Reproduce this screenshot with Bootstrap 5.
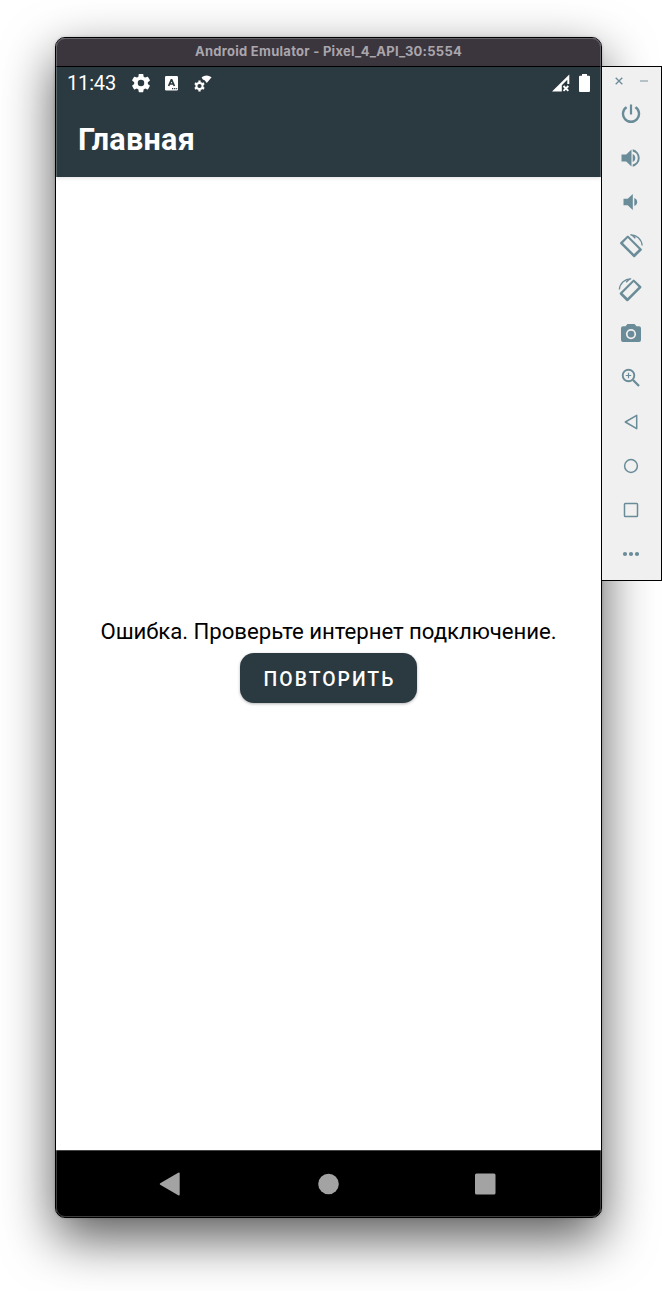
<!DOCTYPE html>
<html lang="ru">
<head>
<meta charset="utf-8">
<meta name="viewport" content="width=device-width, initial-scale=1">
<title>Android Emulator</title>
<link href="https://cdn.jsdelivr.net/npm/bootstrap@5.3.0/dist/css/bootstrap.min.css" rel="stylesheet">
<style>
  body { font-family: Roboto, sans-serif; background: #fff; height: 1291px; padding: 37px 0 0 55px; }
  svg { display: block; flex: none; fill: currentColor; }
  .emulator { width: 547px; height: 1181px; border: 1px solid #000; border-radius: 10px; background: #fff;
    box-shadow: 0 20px 52px rgba(0,0,0,.66), 0 0 3px rgba(0,0,0,.2); }
  .rim { inset: 0; border: 1px solid rgba(255,255,255,.24); border-radius: 9px; pointer-events: none; }
  .titlebar { height: 29px; background: #3b353e; border-bottom: 1px solid #000; color: #aaa6ac;
    font: 700 13px/26px Inter, sans-serif; letter-spacing: .27px; }
  .app-header { height: 110px; background: #2b3940; box-shadow: 0 1px 4px rgba(0,0,0,.12); }
  .status { height: 33px; padding: 0 11px 0 11px; }
  .clock { font-size: 20px; line-height: 33px; width: 48px; letter-spacing: -.15px; }
  .app-title { font-size: 30.5px; line-height: 36px; margin: 22px 0 0 22px; font-weight: 700; letter-spacing: .3px; }
  .message { font-size: 22.2px; line-height: 26px; color: #000; white-space: nowrap; letter-spacing: -.05px; }
  .retry { width: 177px; height: 50px; margin-top: 9px; border-radius: 14px; background: #2b3940 !important; color: #fff !important;
    font-size: 19.4px; font-weight: 500; letter-spacing: 2px; box-shadow: 0 1px 3px rgba(0,0,0,.3); border: 0; padding: 3px 0 0 2px; }
  .softkeys { height: 67px; background: #000; border-top: 1px solid #444; color: #a3a3a3; }
  .toolbox { width: 61px; height: 515px; margin: 29px 0 0 -1px; border: 1px solid #000; background: #f0f0f0; color: #6a8b98; z-index: 2; }
  .toolbox .winctl { height: 25px; padding: 3px 13px 0 13px; }
  .tool { height: 44px; padding-right: 1px; }
</style>
</head>
<body class="d-flex align-items-start overflow-hidden">
<main class="emulator position-relative overflow-visible d-flex flex-column flex-shrink-0">
  <div class="titlebar text-center rounded-top-3">Android Emulator - Pixel_4_API_30:5554</div>
  <header class="app-header text-white">
    <div class="status d-flex align-items-center">
      <span class="clock">11:43</span>
      <svg class="ms-3" width="20" height="20" viewBox="1.5 2.5 21 21"><path d="M19.14 12.94c.04-.3.06-.61.06-.94s-.02-.64-.07-.94l2.03-1.58a.49.49 0 0 0 .12-.61l-1.92-3.32a.49.49 0 0 0-.59-.22l-2.39.96c-.5-.38-1.03-.7-1.62-.94l-.36-2.54a.48.48 0 0 0-.48-.41h-3.84a.47.47 0 0 0-.47.41l-.36 2.54c-.59.24-1.13.57-1.62.94l-2.39-.96a.48.48 0 0 0-.59.22L2.74 8.87a.48.48 0 0 0 .12.61l2.03 1.58c-.05.3-.09.63-.09.94s.02.64.07.94l-2.03 1.58a.49.49 0 0 0-.12.61l1.92 3.32c.12.22.37.29.59.22l2.39-.96c.5.38 1.03.7 1.62.94l.36 2.54c.05.24.24.41.48.41h3.84c.24 0 .44-.17.47-.41l.36-2.54c.59-.24 1.13-.56 1.62-.94l2.39.96c.22.08.47 0 .59-.22l1.92-3.32a.48.48 0 0 0-.12-.61zM12 15.400a3.400 3.400 0 1 1 0-6.800 3.400 3.400 0 0 1 0 6.800z"/></svg>
      <svg style="margin-left:14px" width="13" height="15" viewBox="0 0 13 15"><rect width="13" height="14.5" rx="1.2"/><path d="M3.600 10 6.300 3.800h.4L9.400 10M4.500 8h4" fill="none" stroke="#2b3940" stroke-width="1.700"/><path d="M7 12h1.300v1.200H7zm2.100 0h1.300v1.200H9.100zm2.100 0h1v1.200h-1z" fill="#2b3940"/></svg>
      <svg style="margin-left:16px" width="18" height="18" viewBox="0 1 18 18"><path d="M7.600 3.200Q12.500-.2 17.600 3.200L12.800 9 10.600 6.200 8.800 5.400z"/><circle cx="5.500" cy="12" r="3.100" fill="none" stroke="currentColor" stroke-width="2"/><path d="M5.500 6.600v2M5.500 15.400v2M.9 9.300l1.700 1M8.400 13.700l1.700 1M.9 14.700l1.700-1M8.400 10.300l1.700-1" stroke="currentColor" stroke-width="2.300"/></svg>
      <svg class="ms-auto" width="18" height="18" viewBox="0 1 18 18" overflow="visible"><path d="M0 17.500 17.300.5v9.400h-2V5.700L9.800 11.200v6.300z"/><path d="M11.500 12l4.800 4.800m0-4.800-4.800 4.800" stroke="currentColor" stroke-width="1.900"/></svg>
      <svg style="margin-left:9px" width="11" height="18" viewBox="0 1 11 18" overflow="visible"><path d="M3 0h5v1.800h2a1 1 0 0 1 1 1V17a1 1 0 0 1-1 1H1a1 1 0 0 1-1-1V2.800a1 1 0 0 1 1-1h2z"/></svg>
    </div>
    <h1 class="app-title">Главная</h1>
  </header>
  <section class="flex-grow-1 d-flex flex-column align-items-center justify-content-center pb-1 mb-0">
    <div class="message">Ошибка. Проверьте интернет подключение.</div>
    <button class="btn retry mb-0" type="button">ПОВТОРИТЬ</button>
    <div class="pb-1 w-100" style="margin-top:-2px"></div>
  </section>
  <nav class="softkeys d-flex align-items-center rounded-bottom-3">
    <svg style="margin-left:103px" width="22" height="24" viewBox="0 0 22 24"><path d="M1.200 11.200 19.200.8Q20.700 0 20.700 1.800v20.400q0 1.800-1.500 1L1.200 12.800q-1-.8 0-1.600z"/></svg>
    <svg style="margin-left:137px" width="21" height="22" viewBox="0 0 21 22"><circle cx="10.500" cy="11" r="10.300"/></svg>
    <svg style="margin-left:136px" width="21" height="22" viewBox="0 0 21 22"><rect y=".500" width="20.500" height="21" rx="1.500"/></svg>
  </nav>
  <div class="rim position-absolute"></div>
</main>
<aside class="toolbox position-relative flex-shrink-0">
  <div class="winctl d-flex justify-content-between align-items-center">
    <svg width="8" height="8" viewBox="0 0 8 8"><path d="M.7.7l6.600 6.600m0-6.600L.7 7.300" stroke="currentColor" stroke-width="1.300"/></svg>
    <svg width="8" height="8" viewBox="0 0 8 8"><path d="M0 4h8" stroke="#a9bac1" stroke-width="1.700"/></svg>
  </div>
  <div class="tool d-flex align-items-center justify-content-center"><svg width="24" height="24" viewBox="0 0 24 24"><path d="M10.900 2.500h2.200v10h-2.200zM17.300 4.300l-1.700 1.700a6.800 6.800 0 1 1-7.200 0L6.700 4.300a9.200 9.200 0 1 0 10.600 0z"/></svg></div>
  <div class="tool d-flex align-items-center justify-content-center"><svg width="24" height="24" viewBox="0 0 24 24"><path d="M2.500 8.500v7h4.700l5.300 5V3.500l-5.300 5zM13.700 8v8c1.700-.7 2.600-2.200 2.600-4s-.9-3.300-2.600-4zM13.700 3.300v2.200a6.700 6.700 0 0 1 0 13v2.200a8.900 8.900 0 0 0 0-17.400z"/></svg></div>
  <div class="tool d-flex align-items-center justify-content-center"><svg width="24" height="24" viewBox="0 0 24 24"><path d="M4.500 8.800v6.400h4.200l5.100 4.800V4L8.700 8.800zM15.300 8v8c1.900-.7 2.900-2.200 2.900-4s-1-3.300-2.900-4z"/></svg></div>
  <div class="tool d-flex align-items-center justify-content-center"><svg width="24" height="24" viewBox="0 0 24 24" overflow="visible"><path fill-rule="evenodd" d="M8 1.900Q8.800 1.100 9.600 1.900L22.500 14.800q.8.800 0 1.600l-6.500 6.500q-.8.800-1.600 0L1.400 9.900q-.8-.8 0-1.600zM8.800 4.100 4 8.900l11 11 4.900-4.700z"/><path d="M11.300.9c6.300-.4 11.300 4.300 11.900 10.600" fill="none" stroke="currentColor" stroke-width="1.300"/><path d="M11.500.6l4.300 4.200 1-1-2-2.600z"/></svg></div>
  <div class="tool d-flex align-items-center justify-content-center"><svg width="24" height="24" viewBox="0 0 24 24" overflow="visible"><g transform="matrix(-1 0 0 1 23.500 0)"><path fill-rule="evenodd" d="M8 1.900Q8.800 1.100 9.600 1.900L22.500 14.800q.8.800 0 1.600l-6.500 6.500q-.8.800-1.600 0L1.400 9.900q-.8-.8 0-1.600zM8.800 4.100 4 8.900l11 11 4.900-4.700z"/><path d="M11.300.9c6.300-.4 11.300 4.300 11.900 10.600" fill="none" stroke="currentColor" stroke-width="1.300"/><path d="M11.500.6l4.300 4.200 1-1-2-2.600z"/></g></svg></div>
  <div class="tool d-flex align-items-center justify-content-center"><svg width="24" height="24" viewBox="0 0 24 24"><path fill-rule="evenodd" d="M8.500 2h7l2 2.200H20q2 0 2 2V18q0 2-2 2H4q-2 0-2-2V6.200q0-2 2-2h2.500zM12 7a5.100 5.100 0 1 0 0 10.200A5.100 5.100 0 0 0 12 7z"/><circle cx="12" cy="12.100" r="3.400"/></svg></div>
  <div class="tool d-flex align-items-center justify-content-center"><svg width="24" height="24" viewBox="0 0 24 24" stroke="currentColor"><circle cx="9.500" cy="9.500" r="5.800" fill="none" stroke-width="1.900"/><path d="M6.800 9.500h5.400M9.500 6.800v5.400" stroke-width="1.200"/><path d="M14 14l6 6" stroke-width="2.300"/></svg></div>
  <div class="tool d-flex align-items-center justify-content-center"><svg width="24" height="24" viewBox="0 0 24 24"><path d="M17.700 5.300v13.400L6.300 12z" fill="none" stroke="currentColor" stroke-width="1.500" stroke-linejoin="round"/></svg></div>
  <div class="tool d-flex align-items-center justify-content-center"><svg width="24" height="24" viewBox="0 0 24 24"><circle cx="12" cy="12" r="6.400" fill="none" stroke="currentColor" stroke-width="1.500"/></svg></div>
  <div class="tool d-flex align-items-center justify-content-center"><svg width="24" height="24" viewBox="0 0 24 24"><rect x="5.500" y="5.500" width="13" height="13" rx=".8" fill="none" stroke="currentColor" stroke-width="1.500"/></svg></div>
  <div class="tool d-flex align-items-center justify-content-center"><svg width="24" height="24" viewBox="0 0 24 24"><circle cx="6" cy="12" r="2.100"/><circle cx="12" cy="12" r="2.100"/><circle cx="18" cy="12" r="2.100"/></svg></div>
</aside>
<script src="https://cdn.jsdelivr.net/npm/bootstrap@5.3.0/dist/js/bootstrap.bundle.min.js"></script>
</body>
</html>
